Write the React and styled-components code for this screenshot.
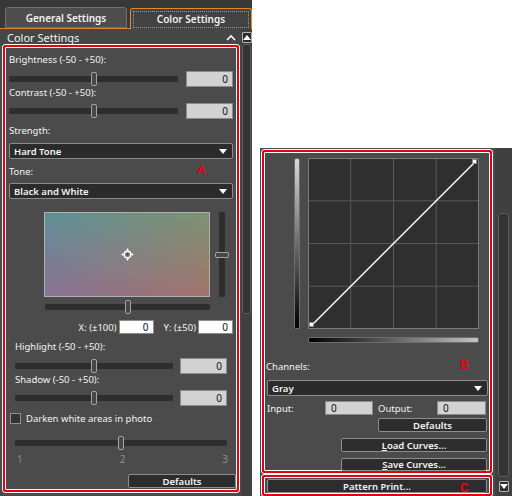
import React from 'react';
import styled, { createGlobalStyle } from 'styled-components';

const font = `"Noto Sans", "Open Sans", sans-serif`;

const GlobalStyle = createGlobalStyle`
  html, body {
    margin: 0;
    padding: 0;
    background: #fff;
    font-family: ${font};
  }
  * { box-sizing: border-box; }
`;

const Page = styled.div`
  display: flex;
  align-items: flex-start;
  width: 512px;
  height: 496px;
  overflow: hidden;
`;

const LeftPanel = styled.div`
  width: 252px;
  height: 496px;
  background: #4b4b4b;
  display: flex;
  flex-direction: column;
`;

const TabBar = styled.div`
  height: 29px;
  background: #383838;
  display: flex;
  align-items: flex-end;
  padding-left: 5px;
  gap: 3px;
  border-bottom: 1px solid #d8862a;
`;

const Tab = styled.div`
  width: 122px;
  height: 21px;
  margin-bottom: ${p => (p.$active ? '-1px' : '0')};
  display: flex;
  align-items: center;
  justify-content: center;
  font-size: 10px;
  font-weight: 600;
  color: #f2f2f2;
  border-radius: 3px 3px 0 0;
  background: ${p => (p.$active ? '#424242' : '#4e4e4e')};
  border: 1px solid ${p => (p.$active ? '#e48a1f' : '#707070')};
  border-bottom: ${p => (p.$active ? 'none' : '1px solid #707070')};
  position: relative;

  &::after {
    content: '';
    display: ${p => (p.$active ? 'block' : 'none')};
    position: absolute;
    inset: 2px 2px 1px 2px;
    border: 1px dotted #9a9a9a;
  }
`;

const Body = styled.div`
  flex: 1;
  display: flex;
`;

const MainCol = styled.div`
  width: ${p => p.$w}px;
  display: flex;
  flex-direction: column;
  padding-top: ${p => p.$pt || 0}px;
`;

const ScrollCol = styled.div`
  flex: 1;
  background: #404040;
  display: flex;
  flex-direction: column;
  align-items: center;
  padding-top: ${p => p.$pt}px;
`;

const ScrollButton = styled.div`
  width: 10px;
  height: 11px;
  border: 1px solid #b5b5b5;
  border-radius: 1px;
  background: #2c2c2c;
  display: flex;
  align-items: center;
  justify-content: center;
  margin-top: ${p => p.$mt || 0}px;
`;

const ScrollThumb = styled.div`
  width: ${p => p.$w}px;
  height: ${p => p.$h}px;
  margin-top: ${p => p.$mt || 0}px;
  background: #343434;
  border: 1px solid #5e5e5e;
  border-radius: 3px;
`;

const SectionHeader = styled.div`
  height: 16px;
  display: flex;
  align-items: center;
  justify-content: space-between;
  padding: 0 5px 0 7px;
  background: #464646;
  color: #f4f4f4;
  font-size: 11px;
`;

const RedBox = styled.div`
  position: relative;
  width: ${p => p.$w}px;
  margin-left: ${p => p.$ml || 0}px;
  margin-top: ${p => p.$mt || 0}px;
  border: 2px solid #e5000f;
  border-radius: 3px;
  box-shadow: 0 0 0 1px #fff, inset 0 0 0 1px #fff;
  padding: ${p => p.$pad || '0 4px 2px 4px'};
  display: flex;
  flex-direction: column;
  overflow: hidden;
`;

const Marker = styled.span`
  position: absolute;
  left: ${p => p.$x}px;
  top: ${p => p.$y}px;
  color: #ee0010;
  font-family: "Liberation Sans", Arial, sans-serif;
  font-weight: 700;
  font-size: 12px;
  line-height: 12px;
`;

const Label = styled.div`
  height: 12px;
  line-height: 12px;
  margin-top: ${p => p.$mt || 0}px;
  padding-left: ${p => p.$indent || 0}px;
  font-size: 9.5px;
  color: #f4f4f4;
  white-space: nowrap;
`;

const SliderRow = styled.div`
  display: flex;
  align-items: center;
  gap: ${p => p.$gap || 8}px;
  height: 16px;
  margin-top: ${p => p.$mt || 0}px;
  padding: 0 ${p => p.$inset || 0}px;
`;

const Slider = styled.div`
  position: relative;
  flex: ${p => (p.$w ? 'none' : '1')};
  width: ${p => (p.$w ? `${p.$w}px` : 'auto')};
  height: 14px;
  margin-top: ${p => p.$mt || 0}px;
  margin-left: ${p => p.$ml || 0}px;

  &::before {
    content: '';
    position: absolute;
    left: 0;
    right: 0;
    top: 4px;
    height: 6px;
    background: #2e2e2e;
    border-radius: 1px;
  }
`;

const VSlider = styled.div`
  position: relative;
  width: 14px;
  height: 85px;

  &::before {
    content: '';
    position: absolute;
    top: 0;
    bottom: 0;
    left: 4px;
    width: 6px;
    background: #2e2e2e;
    border-radius: 1px;
  }
`;

const Thumb = styled.span`
  position: absolute;
  top: 0;
  left: calc(${p => p.$pos * 100}% - 3px);
  width: 6px;
  height: 14px;
  background: #474747;
  border: 1px solid #a5a5a5;
  border-radius: 2px;
`;

const VThumb = styled.span`
  position: absolute;
  left: 0;
  top: calc(${p => p.$pos * 100}% - 3px);
  width: 14px;
  height: 6px;
  background: #474747;
  border: 1px solid #a5a5a5;
  border-radius: 2px;
`;

const ValueBox = styled.div`
  width: ${p => p.$w}px;
  height: ${p => p.$h || 16}px;
  border: 1px solid #8c8c8c;
  background: ${p => (p.$white ? '#ffffff' : '#d2d2d2')};
  color: #111;
  font-size: 10px;
  line-height: ${p => (p.$h || 16) - 2}px;
  text-align: ${p => (p.$left ? 'left' : 'right')};
  padding: 0 ${p => (p.$left ? '5px' : '4px')};
`;

const Select = styled.div`
  height: 16px;
  margin-top: ${p => p.$mt || 0}px;
  margin-left: ${p => p.$ml || 0}px;
  width: ${p => (p.$w ? `${p.$w}px` : 'auto')};
  background: #2b2b2b;
  border: 1px solid #8a8a8a;
  border-radius: 2px;
  color: #f4f4f4;
  font-size: 9.5px;
  font-weight: 600;
  display: flex;
  align-items: center;
  justify-content: space-between;
  padding: 0 5px 0 4px;
`;

const PadRow = styled.div`
  display: flex;
  gap: 5px;
  margin-top: ${p => p.$mt}px;
  padding-left: 35px;
`;

const ColorPad = styled.div`
  position: relative;
  width: 166px;
  height: 85px;
  border: 1px solid #b0b0b0;
  background: linear-gradient(to right, #8b7396, #a3736c);
  display: flex;
  align-items: center;
  justify-content: center;

  &::before {
    content: '';
    position: absolute;
    inset: 0;
    background: linear-gradient(to right, #5f8f96, #7e9272);
    -webkit-mask-image: linear-gradient(to bottom, #000, transparent);
    mask-image: linear-gradient(to bottom, #000, transparent);
  }

  svg { position: relative; }
`;

const XYRow = styled.div`
  display: flex;
  justify-content: flex-end;
  align-items: center;
  height: 14px;
  margin-top: ${p => p.$mt}px;
  gap: 2px;
  font-size: 9.5px;
  color: #f4f4f4;
`;

const XYLabel = styled.span`
  margin-left: ${p => p.$ml || 0}px;
  white-space: nowrap;
`;

const CheckRow = styled.label`
  display: flex;
  align-items: center;
  gap: 5px;
  height: 12px;
  margin-top: ${p => p.$mt}px;
  padding-left: 1px;
  font-size: 9.5px;
  color: #f4f4f4;
`;

const CheckBox = styled.span`
  width: 11px;
  height: 11px;
  background: #333;
  border: 1px solid #8f8f8f;
`;

const Ticks = styled.div`
  display: flex;
  justify-content: space-between;
  height: 12px;
  line-height: 12px;
  margin-top: ${p => p.$mt}px;
  padding: 0 5px 0 8px;
  font-size: 10px;
  color: #8e8e8e;
`;

const Button = styled.div`
  align-self: ${p => (p.$stretch ? 'stretch' : 'flex-end')};
  width: ${p => (p.$w ? `${p.$w}px` : 'auto')};
  height: ${p => p.$h || 14}px;
  margin-top: ${p => p.$mt || 0}px;
  margin-right: ${p => p.$mr || 0}px;
  background: #2d2d2d;
  border: 1px solid #8e8e8e;
  border-radius: 2px;
  color: #f4f4f4;
  font-size: 9.5px;
  font-weight: 600;
  display: flex;
  align-items: center;
  justify-content: center;
  white-space: nowrap;

  u { text-underline-offset: 1px; }
`;

const RightPanel = styled.div`
  width: 252px;
  height: 348px;
  margin-top: 148px;
  margin-left: 8px;
  background: #4b4b4b;
  display: flex;
`;

const CurveRow = styled.div`
  display: flex;
  gap: 8px;
  margin-top: 6px;
  padding-left: 30px;
`;

const VGradient = styled.div`
  width: 6px;
  height: 171px;
  border: 1px solid #6e6e6e;
  border-radius: 2px;
  background: linear-gradient(to bottom, #d8d8d8, #000);
`;

const HGradient = styled.div`
  width: 171px;
  height: 6px;
  margin-top: 8px;
  margin-left: 44px;
  border: 1px solid #6e6e6e;
  border-radius: 2px;
  background: linear-gradient(to right, #000, #c4c4c4);
`;

const IORow = styled.div`
  display: flex;
  align-items: center;
  height: 14px;
  margin-top: ${p => p.$mt}px;
  padding-left: 3px;
  font-size: 9.5px;
  color: #f4f4f4;
`;

const IOLabel = styled.span`
  width: ${p => p.$w}px;
  padding-left: ${p => p.$pl || 0}px;
`;

const ArrowDown = () => (
  <svg width="8" height="5" viewBox="0 0 8 5">
    <path d="M0 0 H8 L4 5 Z" fill="#fff" />
  </svg>
);

const ArrowUp = () => (
  <svg width="8" height="5" viewBox="0 0 8 5">
    <path d="M0 5 H8 L4 0 Z" fill="#fff" />
  </svg>
);

const Caret = () => (
  <svg width="10" height="7" viewBox="0 0 10 7">
    <path d="M1 6 L5 2 L9 6" fill="none" stroke="#fff" strokeWidth="1.6" />
  </svg>
);

const Crosshair = () => (
  <svg width="13" height="13" viewBox="0 0 13 13">
    <path d="M6.5 0 L8 2.5 H5 Z M6.5 13 L8 10.5 H5 Z M0 6.5 L2.5 5 V8 Z M13 6.5 L10.5 5 V8 Z" fill="#fff" />
    <circle cx="6.5" cy="6.5" r="3.3" fill="none" stroke="#fff" strokeWidth="1.4" />
    <circle cx="6.5" cy="6.5" r="1" fill="#333" />
  </svg>
);

const CurveGraph = () => {
  const s = 171;
  const q = [42.75, 85.5, 128.25];
  return (
    <svg width={s} height={s} viewBox={`0 0 ${s} ${s}`}>
      <rect x="0.5" y="0.5" width={s - 1} height={s - 1} fill="#2f2f2f" stroke="#7a7a7a" />
      {q.map(v => (
        <g key={v}>
          <line x1={v} y1="1" x2={v} y2={s - 1} stroke="#585858" />
          <line x1="1" y1={v} x2={s - 1} y2={v} stroke="#585858" />
        </g>
      ))}
      <line x1="4" y1={s - 4} x2={s - 4} y2="4" stroke="#fff" strokeWidth="1.4" />
      <rect x="1.5" y={s - 6.5} width="4" height="4" fill="#fff" stroke="#888" strokeWidth="0.6" />
      <rect x={s - 6.5} y="1.5" width="4" height="4" fill="#fff" stroke="#888" strokeWidth="0.6" />
    </svg>
  );
};

const SliderWithValue = ({ mt, inset, gap }) => (
  <SliderRow $mt={mt} $inset={inset} $gap={gap}>
    <Slider>
      <Thumb $pos={0.5} />
    </Slider>
    <ValueBox $w={47}>0</ValueBox>
  </SliderRow>
);

export default function App() {
  return (
    <>
      <GlobalStyle />
      <Page>
        <LeftPanel>
          <TabBar>
            <Tab>General Settings</Tab>
            <Tab $active>Color Settings</Tab>
          </TabBar>
          <Body>
            <MainCol $w={241}>
              <SectionHeader>
                <span>Color Settings</span>
                <Caret />
              </SectionHeader>
              <RedBox $w={236} $ml={3}>
                <Marker $x={192} $y={117}>A</Marker>
                <Label $mt={7}>Brightness (-50 - +50):</Label>
                <SliderWithValue mt={5} />
                <Label $mt={0}>Contrast (-50 - +50):</Label>
                <SliderWithValue mt={4} />
                <Label $mt={6}>Strength:</Label>
                <Select $mt={6}>
                  <span>Hard Tone</span>
                  <ArrowDown />
                </Select>
                <Label $mt={7}>Tone:</Label>
                <Select $mt={5}>
                  <span>Black and White</span>
                  <ArrowDown />
                </Select>
                <PadRow $mt={13}>
                  <ColorPad>
                    <Crosshair />
                  </ColorPad>
                  <VSlider>
                    <VThumb $pos={0.5} />
                  </VSlider>
                </PadRow>
                <Slider $w={165} $ml={36} $mt={3}>
                  <Thumb $pos={0.5} />
                </Slider>
                <XYRow $mt={6}>
                  <XYLabel>X: (±100)</XYLabel>
                  <ValueBox $w={35} $h={14} $white>0</ValueBox>
                  <XYLabel $ml={8}>Y: (±50)</XYLabel>
                  <ValueBox $w={35} $h={14} $white>0</ValueBox>
                </XYRow>
                <Label $mt={7} $indent={6}>Highlight (-50 - +50):</Label>
                <SliderWithValue mt={5} inset={6} gap={7} />
                <Label $mt={0} $indent={6}>Shadow (-50 - +50):</Label>
                <SliderWithValue mt={4} inset={6} gap={7} />
                <CheckRow $mt={6}>
                  <CheckBox />
                  <span>Darken white areas in photo</span>
                </CheckRow>
                <Slider $w={212} $ml={6} $mt={12}>
                  <Thumb $pos={0.5} />
                </Slider>
                <Ticks $mt={3}>
                  <span>1</span>
                  <span>2</span>
                  <span>3</span>
                </Ticks>
                <Button $w={108} $mt={9} $mr={-3}>Defaults</Button>
              </RedBox>
            </MainCol>
            <ScrollCol $pt={3}>
              <ScrollButton>
                <ArrowUp />
              </ScrollButton>
              <ScrollThumb $w={9} $h={270} $mt={1} />
            </ScrollCol>
          </Body>
        </LeftPanel>

        <RightPanel>
          <MainCol $w={235} $pt={2}>
            <RedBox $w={230} $ml={2} $pad="0 0 0 0">
              <Marker $x={196} $y={207}>B</Marker>
              <CurveRow>
                <VGradient />
                <CurveGraph />
              </CurveRow>
              <HGradient />
              <Label $mt={18} $indent={2}>Channels:</Label>
              <Select $mt={7} $ml={3} $w={221}>
                <span>Gray</span>
                <ArrowDown />
              </Select>
              <IORow $mt={5}>
                <IOLabel $w={58}>Input:</IOLabel>
                <ValueBox $w={48} $h={14} $left>0</ValueBox>
                <IOLabel $w={64} $pl={5}>Output:</IOLabel>
                <ValueBox $w={49} $h={14} $left>0</ValueBox>
              </IORow>
              <Button $w={109} $mt={3} $mr={3}>Defaults</Button>
              <Button $w={146} $mt={6} $mr={3}><u>L</u>oad Curves...</Button>
              <Button $w={146} $mt={6} $mr={3} $h={13}><u>S</u>ave Curves...</Button>
            </RedBox>
            <RedBox $w={230} $ml={2} $mt={2} $pad="2px 3px 1px 3px">
              <Marker $x={196} $y={5}>C</Marker>
              <Button $stretch>Pattern Print...</Button>
            </RedBox>
          </MainCol>
          <ScrollCol $pt={65}>
            <ScrollThumb $w={11} $h={264} />
            <ScrollButton $mt={4}>
              <ArrowDown />
            </ScrollButton>
          </ScrollCol>
        </RightPanel>
      </Page>
    </>
  );
}
